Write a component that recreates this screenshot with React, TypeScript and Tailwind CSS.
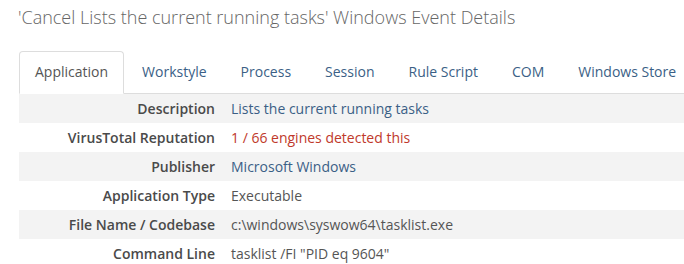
const tabs = ["Application", "Workstyle", "Process", "Session", "Rule Script", "COM", "Windows Store"];

const rows: { label: string; value: string; tone: "link" | "danger" | "plain" }[] = [
  { label: "Description", value: "Lists the current running tasks", tone: "link" },
  { label: "VirusTotal Reputation", value: "1 / 66 engines detected this", tone: "danger" },
  { label: "Publisher", value: "Microsoft Windows", tone: "link" },
  { label: "Application Type", value: "Executable", tone: "plain" },
  { label: "File Name / Codebase", value: "c:\\windows\\syswow64\\tasklist.exe", tone: "plain" },
  { label: "Command Line", value: 'tasklist /FI "PID eq 9604"', tone: "plain" },
];

export default function App() {
  return (
    <div className="w-[684px] h-[264px] overflow-hidden bg-white font-['Open_Sans',sans-serif]">
      <h2 className="pl-[18px] pt-[5px] text-[18px] leading-[25px] font-light text-[#666] whitespace-nowrap">
        'Cancel Lists the current running tasks' Windows Event Details
      </h2>

      <div className="ml-[19px] mt-[21px] flex border-b border-[#ddd] text-[14px] leading-[20px] whitespace-nowrap">
        {tabs.map((tab, i) => (
          <div
            key={tab}
            className={
              i === 0
                ? "shrink-0 -mb-px mr-[2px] px-[15px] py-[10px] border border-[#ddd] border-b-white rounded-t-[4px] bg-white text-[#555]"
                : "shrink-0 mr-[2px] px-[15px] py-[10px] border border-transparent text-[#3b5f86]"
            }
          >
            {tab}
          </div>
        ))}
      </div>

      <div className="ml-[19px] w-[700px] text-[14px] leading-[20px]">
        {rows.map((row, i) => (
          <div key={row.label} className={`flex h-[29px] items-center ${i % 2 === 0 ? "bg-[#f3f3f3]" : "bg-white"}`}>
            <div className="w-[204px] pr-[8px] text-right font-semibold text-[#4a4a4a]">{row.label}</div>
            <div
              className={`pl-[8px] ${
                row.tone === "link" ? "text-[#3b5f86]" : row.tone === "danger" ? "text-[#c0392b]" : "text-[#555]"
              }`}
            >
              {row.value}
            </div>
          </div>
        ))}
      </div>
    </div>
  );
}
